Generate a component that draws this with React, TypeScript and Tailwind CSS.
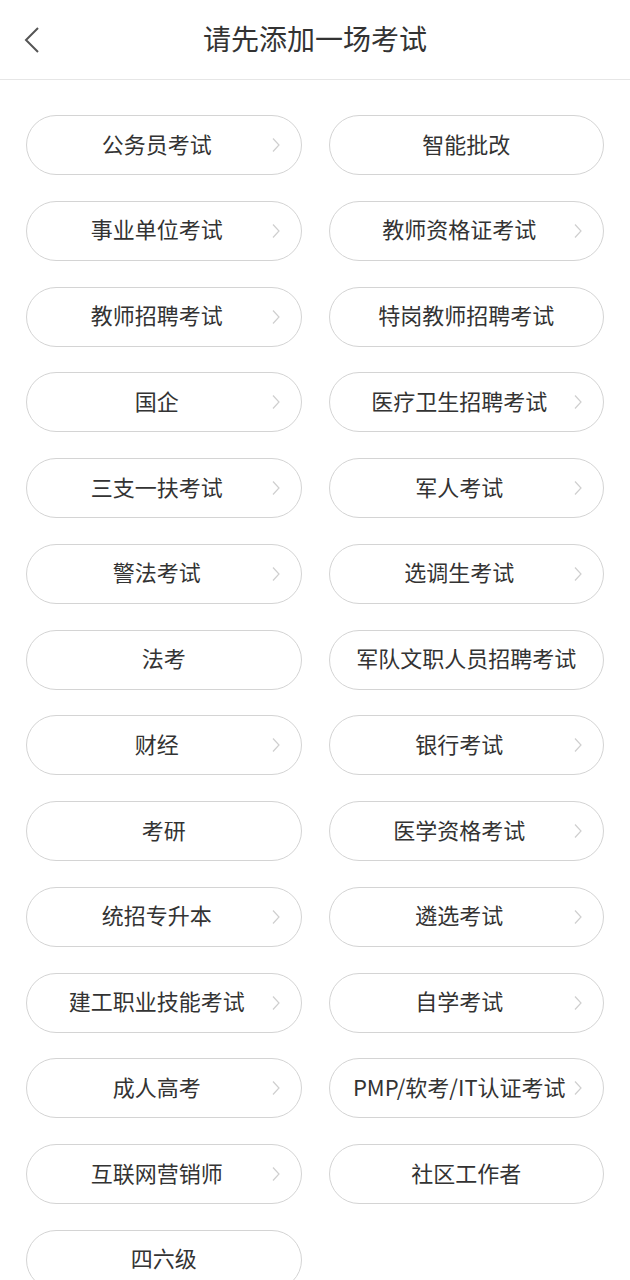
type Item = { label: string; arrow: boolean };

const items: Item[] = [
  { label: "公务员考试", arrow: true },
  { label: "智能批改", arrow: false },
  { label: "事业单位考试", arrow: true },
  { label: "教师资格证考试", arrow: true },
  { label: "教师招聘考试", arrow: true },
  { label: "特岗教师招聘考试", arrow: false },
  { label: "国企", arrow: true },
  { label: "医疗卫生招聘考试", arrow: true },
  { label: "三支一扶考试", arrow: true },
  { label: "军人考试", arrow: true },
  { label: "警法考试", arrow: true },
  { label: "选调生考试", arrow: true },
  { label: "法考", arrow: false },
  { label: "军队文职人员招聘考试", arrow: false },
  { label: "财经", arrow: true },
  { label: "银行考试", arrow: true },
  { label: "考研", arrow: false },
  { label: "医学资格考试", arrow: true },
  { label: "统招专升本", arrow: true },
  { label: "遴选考试", arrow: true },
  { label: "建工职业技能考试", arrow: true },
  { label: "自学考试", arrow: true },
  { label: "成人高考", arrow: true },
  { label: "PMP/软考/IT认证考试", arrow: true },
  { label: "互联网营销师", arrow: true },
  { label: "社区工作者", arrow: false },
  { label: "四六级", arrow: false },
];

function Arrow() {
  return (
    <svg width="10" height="16" viewBox="0 0 10 16" className="shrink-0">
      <path d="M2 1.5 L8 8 L2 14.5" fill="none" stroke="#cfcfcf" strokeWidth="1.2" />
    </svg>
  );
}

export default function App() {
  return (
    <div
      className="w-[630px] h-[1280px] overflow-hidden bg-white text-[#333]"
      style={{ fontFamily: '"Noto Sans CJK SC", "Noto Sans", sans-serif' }}
    >
      <div className="relative h-[80px] flex items-center justify-center border-b border-[#e6e6e6]">
        {/* back */}
        <svg
          width="18"
          height="28"
          viewBox="0 0 18 28"
          className="absolute left-[23px] top-[26px]"
        >
          <path d="M15 2 L3 14 L15 26" fill="none" stroke="#555" strokeWidth="2" />
        </svg>
        <span className="text-[28px] text-[#333] pb-[3px]">请先添加一场考试</span>
      </div>

      <div className="grid grid-cols-2 gap-x-[27px] gap-y-[25.75px] pl-[26px] pr-[26px] pt-[35px]">
        {items.map((it) => (
          <div
            key={it.label}
            className="h-[60px] rounded-full border border-[#d4d4d4] flex items-center pl-[16px] pr-[20px]"
          >
            {it.arrow ? (
              <>
                <span className="flex-1 text-center text-[22px] whitespace-nowrap leading-none pb-[5px]">
                  {it.label}
                </span>
                <Arrow />
              </>
            ) : (
              <span className="flex-1 text-center text-[22px] whitespace-nowrap leading-none pl-[4px] pb-[5px]">
                {it.label}
              </span>
            )}
          </div>
        ))}
      </div>
    </div>
  );
}
